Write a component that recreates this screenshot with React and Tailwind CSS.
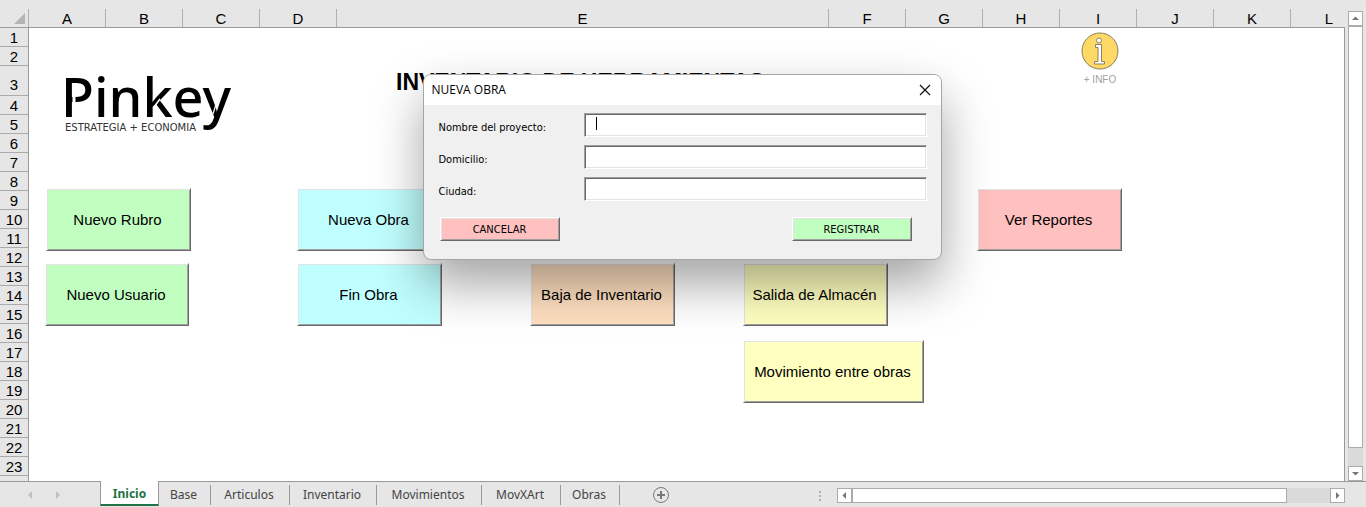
import React from "react";

const columns = [
  ["A", "w-[77px]"],
  ["B", "w-[77px]"],
  ["C", "w-[77px]"],
  ["D", "w-[77px]"],
  ["E", "w-[492px]"],
  ["F", "w-[77px]"],
  ["G", "w-[77px]"],
  ["H", "w-[77px]"],
  ["I", "w-[77px]"],
  ["J", "w-[77px]"],
  ["K", "w-[77px]"],
  ["L", "w-[77px]"],
];

const rows = Array.from({ length: 24 }, (_, i) => i + 1);

const tabs = [
  ["Base", "w-[52px]"],
  ["Articulos", "w-[79px]"],
  ["Inventario", "w-[87px]"],
  ["Movimientos", "w-[105px]"],
  ["MovXArt", "w-[79px]"],
  ["Obras", "w-[59px]"],
];

const raised =
  "border border-t-white border-l-white border-r-[#696969] border-b-[#696969] shadow-[inset_1px_1px_0_#e3e3e3,inset_-1px_-1px_0_#a0a0a0]";

function SheetButton({ children, className }) {
  return (
    <button
      type="button"
      className={`${raised} h-[63px] self-start pr-[2px] whitespace-nowrap text-[15px] leading-5 text-black ${className}`}
    >
      {children}
    </button>
  );
}

function Logo() {
  return (
    <svg
      className="mt-[30px] ml-[30px] h-[78px] w-[180px]"
      viewBox="-4 -12 180 78"
      role="img"
      aria-label="Pinkey, Estrategia + Economia"
    >
      <text x="-2" y="47" fontSize="54" fontWeight="500" fill="#000" fontFamily="'Noto Sans', 'Open Sans', sans-serif">
        Pinkey
      </text>
      <path d="M11 26V37" stroke="#fff" strokeWidth="3" />
      <path d="M91 37L97 29" stroke="#fff" strokeWidth="1.500" />
      <path d="M150 44L154 31" stroke="#fff" strokeWidth="1.200" />
      <text x="2" y="61" fontSize="10" fill="#333" fontFamily="'DejaVu Sans', sans-serif">
        ESTRATEGIA + ECONOMIA
      </text>
    </svg>
  );
}

function InfoButton() {
  return (
    <button type="button" className="mt-1 flex w-12 flex-col items-center gap-[2px] text-[10px] leading-4 text-[#a0a0a0]">
      <svg className="h-[38px] w-[38px]" viewBox="0 0 38 38" aria-hidden="true">
        <circle cx="19" cy="19" r="18" fill="#ffd966" stroke="#8a7f5c" />
        <circle cx="18" cy="8.500" r="2.500" fill="#fff" stroke="#8a8168" />
        <path
          d="M14.500 12.500H20.500V29.500H23.500V32H13.500V29.500H17V15.500H14.500Z"
          fill="#fff"
          stroke="#8a8168"
        />
      </svg>
      <span className="whitespace-nowrap">+ INFO</span>
    </button>
  );
}

function Arrow({ d }) {
  return (
    <svg className="h-[9px] w-[9px]" viewBox="0 0 9 9" aria-hidden="true">
      <path d={d} fill="#777" />
    </svg>
  );
}

const scrollButton =
  "flex h-[15px] w-[15px] shrink-0 items-center justify-center border border-[#ababab] bg-white";

function Field({ id, label, active }) {
  return (
    <div className="flex items-center">
      <label htmlFor={id} className="w-[145px] shrink-0 pt-[6px]">
        {label}
      </label>
      <div className="relative flex-1">
        <input
          id={id}
          type="text"
          className="block h-6 w-full border border-t-[#a0a0a0] border-l-[#a0a0a0] border-r-white border-b-white bg-white px-[11px] shadow-[inset_1px_1px_0_#696969,inset_-1px_-1px_0_#e3e3e3] outline-none"
        />
        {active && <span className="absolute top-1 left-3 h-[13px] w-px bg-black" />}
      </div>
    </div>
  );
}

function Dialog() {
  return (
    <div
      role="dialog"
      aria-labelledby="dialog-title"
      className="w-[519px] overflow-hidden rounded-lg border border-[#a5a5a5] bg-[#f0f0f0] shadow-[0_24px_50px_rgba(0,0,0,0.36)]"
    >
      <div className="flex h-[30px] items-center justify-between bg-white pr-[9px] pl-2">
        <h2 id="dialog-title" className="font-['Open_Sans',sans-serif] text-[12px] leading-4 text-black">
          NUEVA OBRA
        </h2>
        <button type="button" aria-label="Cerrar" className="p-px">
          <svg className="h-3 w-3" viewBox="0 0 12 12" aria-hidden="true">
            <path d="M1 1L11 11M11 1L1 11" stroke="#111" strokeWidth="1.200" fill="none" />
          </svg>
        </button>
      </div>
      <form
        className="flex flex-col gap-2 pt-2 pr-[14px] pb-[18px] pl-[15px] font-['DejaVu_Sans_Condensed','DejaVu_Sans',sans-serif] text-[11px] leading-4 text-black"
        onSubmit={(e) => e.preventDefault()}
      >
        <Field id="proyecto" label="Nombre del proyecto:" active />
        <Field id="domicilio" label="Domicilio:" />
        <Field id="ciudad" label="Ciudad:" />
        <div className="mt-2 flex justify-between pr-[15px] pl-px">
          <button type="button" className={`${raised} h-6 w-[120px] bg-[#ffc0c0] pt-[2px]`}>
            CANCELAR
          </button>
          <button type="submit" className={`${raised} h-6 w-[120px] bg-[#c0ffc0] pt-[2px]`}>
            REGISTRAR
          </button>
        </div>
      </form>
    </div>
  );
}

export default function App() {
  return (
    <div className="relative flex h-screen flex-col overflow-hidden bg-[#e6e6e6] font-['Liberation_Sans',Arial,sans-serif] text-black">
      <div className="flex min-h-0 flex-1">
        <div className="flex min-w-0 flex-1 flex-col">
          <div className="flex h-7 shrink-0 overflow-hidden border-b border-[#999] pt-[9px] text-[15px] leading-5">
            <div className="flex w-[29px] shrink-0 items-start justify-end border-r border-[#b0b0b0] pt-1 pr-[3px]">
              <svg className="h-[11px] w-[11px]" viewBox="0 0 11 11" aria-hidden="true">
                <path d="M11 0V11H0Z" fill="#b4b4b4" />
              </svg>
            </div>
            {columns.map(([name, width]) => (
              <div key={name} className={`${width} shrink-0 border-r border-[#b0b0b0] text-center`}>
                {name}
              </div>
            ))}
          </div>

          <div className="flex min-h-0 flex-1">
            <div className="w-[29px] shrink-0 overflow-hidden border-r border-[#999] text-center text-[15px]">
              {rows.map((n) => (
                <div
                  key={n}
                  className={`flex items-end justify-center border-b border-[#ababab] leading-4 ${
                    n === 3 ? "h-[30px] pb-[2px]" : "h-[19px]"
                  }`}
                >
                  {n}
                </div>
              ))}
            </div>

            <main className="min-w-0 flex-1 overflow-hidden border-r border-[#999] bg-white">
              <div className="grid h-[160px] grid-cols-[367px_680px_auto] items-start">
                <Logo />
                <h1 className="mt-10 text-[23px] leading-7 font-bold whitespace-nowrap">
                  INVENTARIO DE HERRAMIENTAS
                </h1>
                <InfoButton />
              </div>
              <div className="ml-4 grid grid-cols-[252px_233px_213px_234px_auto] grid-rows-[75px_77px_63px]">
                <SheetButton className="col-start-1 row-start-1 ml-px w-[145px] bg-[#c0ffc0]">Nuevo Rubro</SheetButton>
                <SheetButton className="col-start-1 row-start-2 w-[144px] bg-[#c0ffc0]">Nuevo Usuario</SheetButton>
                <SheetButton className="col-start-2 row-start-1 w-[145px] bg-[#c0ffff]">Nueva Obra</SheetButton>
                <SheetButton className="col-start-2 row-start-2 w-[145px] bg-[#c0ffff]">Fin Obra</SheetButton>
                <SheetButton className="col-start-3 row-start-2 w-[145px] bg-[#ffe0c0]">Baja de Inventario</SheetButton>
                <SheetButton className="col-start-4 row-start-2 w-[145px] bg-[#ffffc0]">Salida de Almacén</SheetButton>
                <SheetButton className="col-start-4 row-start-3 w-[181px] bg-[#ffffc0]">
                  Movimiento entre obras
                </SheetButton>
                <SheetButton className="col-start-5 row-start-1 w-[145px] bg-[#ffc0c0]">Ver Reportes</SheetButton>
              </div>
            </main>
          </div>
        </div>

        <div className="flex w-[21px] shrink-0 flex-col pt-[11px] pl-[3px]">
          <button type="button" aria-label="Subir" className={scrollButton}>
            <Arrow d="M1 6L4.500 2.500L8 6Z" />
          </button>
          <div className="flex w-[15px] flex-1 flex-col bg-[#dadada]">
            <div className="h-[96%] border border-[#ababab] bg-white" />
          </div>
          <button type="button" aria-label="Bajar" className={scrollButton}>
            <Arrow d="M1 3L4.500 6.500L8 3Z" />
          </button>
        </div>
      </div>

      <footer className="flex h-[26px] shrink-0 items-start text-[12px]">
        <div className="flex h-full w-[100px] shrink-0 items-center justify-center gap-5 border-t border-[#999] pr-3">
          <button type="button" aria-label="Hojas anteriores">
            <svg className="h-2 w-2" viewBox="0 0 8 8" aria-hidden="true">
              <path d="M6 0V8L2 4Z" fill="#c0c0c0" />
            </svg>
          </button>
          <button type="button" aria-label="Hojas siguientes">
            <svg className="h-2 w-2" viewBox="0 0 8 8" aria-hidden="true">
              <path d="M2 0V8L6 4Z" fill="#c0c0c0" />
            </svg>
          </button>
        </div>
        <button
          type="button"
          className="h-[25px] w-[59px] shrink-0 border-r border-b-2 border-l border-r-[#999] border-b-[#217346] border-l-[#999] bg-white pt-[3px] font-['Noto_Sans',sans-serif] leading-4 font-bold text-[#217346]"
        >
          Inicio
        </button>
        <div className="flex h-full min-w-0 flex-1 items-start border-t border-[#999] pr-[21px]">
          {tabs.map(([name, width]) => (
            <button
              key={name}
              type="button"
              className={`${width} mt-[3px] h-5 shrink-0 border-r border-[#999] pr-[2px] font-['Noto_Sans',sans-serif] leading-4 text-[#444]`}
            >
              {name}
            </button>
          ))}
          <button type="button" aria-label="Hoja nueva" className="mt-1 ml-8 shrink-0">
            <svg className="h-[18px] w-[18px]" viewBox="0 0 18 18" aria-hidden="true">
              <circle cx="9" cy="9" r="7.500" fill="none" stroke="#777" />
              <path d="M9 5V13M5 9H13" stroke="#777" strokeWidth="2" />
            </svg>
          </button>
          <div className="mt-[6px] ml-auto flex w-[526px] shrink-0 items-center">
            <svg className="mr-4 h-[10px] w-[2px]" viewBox="0 0 2 10" aria-hidden="true">
              <path d="M0 0H2V2H0ZM0 4H2V6H0ZM0 8H2V10H0Z" fill="#b0b0b0" />
            </svg>
            <button type="button" aria-label="Izquierda" className={scrollButton}>
              <Arrow d="M6 1L2.500 4.500L6 8Z" />
            </button>
            <div className="flex h-[15px] flex-1 bg-[#dadada]">
              <div className="w-[91%] border border-[#ababab] bg-white" />
            </div>
            <button type="button" aria-label="Derecha" className={scrollButton}>
              <Arrow d="M3 1L6.500 4.500L3 8Z" />
            </button>
          </div>
        </div>
      </footer>

      <div className="absolute inset-x-0 top-[74px] flex justify-center pr-[2px]">
        <Dialog />
      </div>
    </div>
  );
}
